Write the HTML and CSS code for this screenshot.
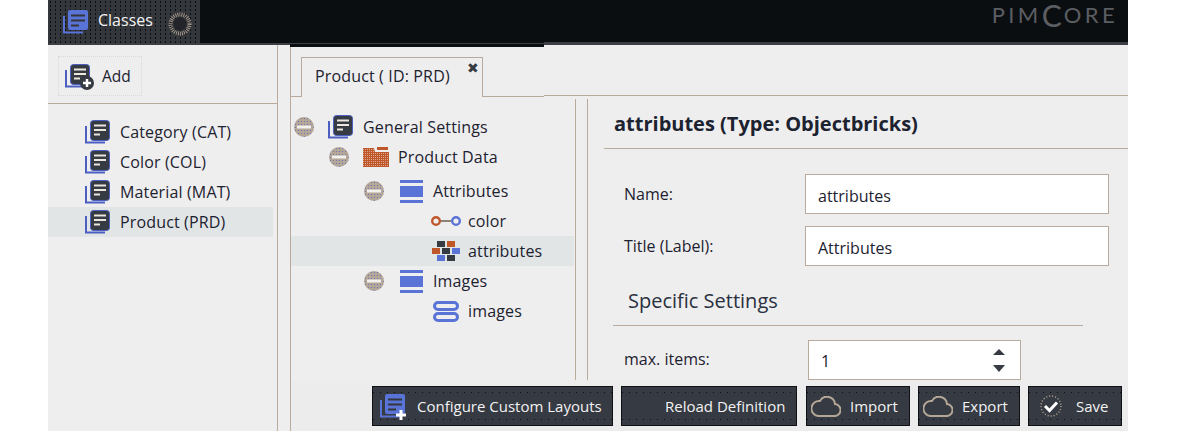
FILE: index.html
```html
<!DOCTYPE html>
<html lang="en">
<head>
<meta charset="utf-8">
<title>Classes</title>
<link rel="stylesheet" href="styles.css">
</head>
<body>
<svg class="defs" width="0" height="0" aria-hidden="true">
  <defs>
    <pattern id="dots" width="3" height="3" patternUnits="userSpaceOnUse"><rect width="3" height="3" fill="#b5a797"/><rect x="1" y="1" width="1" height="1" fill="#6d77b8"/></pattern>
    <pattern id="fold" width="2" height="2" patternUnits="userSpaceOnUse"><rect width="2" height="2" fill="#c0572b"/><rect width="1" height="1" fill="#dba98e"/></pattern>
    <symbol id="i-class" viewBox="0 0 25 24">
      <path d="M1 6v16.500h19" fill="none" stroke="#4a5fc1" stroke-width="2"/>
      <rect x="5.500" y="0.500" width="19" height="20" rx="3" fill="#363a42" stroke="#4a5fc1"/>
      <path d="M9 5.500h12M9 10h12M9 14.500h6" stroke="#ece6de" stroke-width="2"/>
    </symbol>
    <symbol id="i-class-blue" viewBox="0 0 25 24">
      <path d="M1 6v16.500h19" fill="none" stroke="#5a73d6" stroke-width="2"/>
      <rect x="5" y="0" width="20" height="20" rx="2" fill="#5a73d6"/>
      <path d="M8 5.500h14M8 10.500h14M8 15.500h8" stroke="#33363b" stroke-width="2"/>
    </symbol>
    <symbol id="i-minus" viewBox="0 0 20 20">
      <circle cx="10" cy="10" r="10" fill="url(#dots)"/>
      <rect x="3" y="8.500" width="14" height="3" fill="#f2f0ec"/>
    </symbol>
    <symbol id="i-folder" viewBox="0 0 26 20">
      <path d="M0 1h11l1 4h14v15H0z" fill="url(#fold)"/>
      <path d="M14 0h11v3H14z" fill="#c0572b"/>
    </symbol>
    <symbol id="i-block" viewBox="0 0 23 23">
      <path d="M0 0h23v3H0zM0 6h23v11H0zM0 20h23v3H0z" fill="#5a73d6"/>
    </symbol>
    <symbol id="i-keyval" viewBox="0 0 30 10">
      <path d="M9 5h13" stroke="#8a8478" stroke-width="2"/>
      <circle cx="5" cy="5" r="3.800" fill="none" stroke="#c0572b" stroke-width="2.400"/>
      <circle cx="25" cy="5" r="3.800" fill="none" stroke="#5a73d6" stroke-width="2.400"/>
    </symbol>
    <symbol id="i-bricks" viewBox="0 0 29 21">
      <path d="M5 0h8v6H5zM15 14h8v6h-8zM10 7h8v6h-8z" fill="#363a42"/>
      <path d="M15 0h8v6h-8zM0 7h8v6H0z" fill="#c0572b"/>
      <path d="M20 7h8v6h-8zM5 14h8v6H5z" fill="#5a73d6"/>
    </symbol>
    <symbol id="i-images" viewBox="0 0 26 21">
      <rect x="1.500" y="1.500" width="23" height="7" rx="3.500" fill="none" stroke="#5a73d6" stroke-width="3"/>
      <rect x="1.500" y="12.500" width="23" height="7" rx="3.500" fill="none" stroke="#5a73d6" stroke-width="3"/>
    </symbol>
    <symbol id="i-cloud" viewBox="0 0 30 21">
      <path d="M7 20h16a6 6 0 0 0 1-12 8 8 0 0 0-15-3 7.500 7.500 0 0 0-2 15z" fill="none" stroke="#b5a797" stroke-width="2"/>
    </symbol>
  </defs>
</svg>

<div class="app">
  <header class="topbar">
    <div class="maintab">
      <svg class="ico"><use href="#i-class-blue"/></svg>
      <span class="maintab-label">Classes</span>
      <svg class="spinner" viewBox="0 0 24 24" aria-hidden="true">
        <circle cx="12" cy="12" r="9.500" fill="none" stroke="#b5a797" stroke-width="4" stroke-dasharray="0.800 1.200"/>
        <circle cx="12" cy="12" r="6.500" fill="#22242a"/>
      </svg>
    </div>
    <div class="logo">PIM<span class="logo-c">C</span>ORE</div>
  </header>

  <div class="main">
    <aside class="sidebar">
      <div class="side-tools">
        <button class="add-btn" type="button">
          <span class="add-ico">
            <svg class="ico"><use href="#i-class"/></svg>
            <svg class="plus" viewBox="0 0 14 14"><circle cx="7" cy="7" r="7" fill="#363a42"/><path d="M7 3v8M3 7h8" stroke="#fff" stroke-width="2.500"/></svg>
          </span>
          Add
        </button>
      </div>
      <ul class="class-list">
        <li class="class-item"><svg class="ico"><use href="#i-class"/></svg>Category (CAT)</li>
        <li class="class-item"><svg class="ico"><use href="#i-class"/></svg>Color (COL)</li>
        <li class="class-item"><svg class="ico"><use href="#i-class"/></svg>Material (MAT)</li>
        <li class="class-item is-selected"><svg class="ico"><use href="#i-class"/></svg>Product (PRD)</li>
      </ul>
    </aside>

    <section class="workspace">
      <div class="tabstrip">
        <div class="doc-tab">Product ( ID: PRD)<span class="doc-close">&#10006;</span></div>
      </div>

      <div class="panels">
        <div class="tree">
          <div class="node l0"><svg class="toggle"><use href="#i-minus"/></svg><svg class="ico"><use href="#i-class"/></svg>General Settings</div>
          <div class="node l1"><svg class="toggle"><use href="#i-minus"/></svg><svg class="ico folder"><use href="#i-folder"/></svg>Product Data</div>
          <div class="node l2 spaced"><svg class="toggle"><use href="#i-minus"/></svg><svg class="ico block"><use href="#i-block"/></svg>Attributes</div>
          <div class="node l3"><svg class="ico keyval"><use href="#i-keyval"/></svg>color</div>
          <div class="node l3 is-selected"><svg class="ico bricks"><use href="#i-bricks"/></svg>attributes</div>
          <div class="node l2"><svg class="toggle"><use href="#i-minus"/></svg><svg class="ico block"><use href="#i-block"/></svg>Images</div>
          <div class="node l3"><svg class="ico images"><use href="#i-images"/></svg>images</div>
        </div>

        <div class="editor">
          <h2 class="editor-title">attributes (Type: Objectbricks)</h2>
          <div class="form">
            <label class="field"><span class="field-label">Name:</span><input class="text-input" value="attributes"></label>
            <label class="field"><span class="field-label">Title (Label):</span><input class="text-input" value="Attributes"></label>
            <h3 class="fieldset-title">Specific Settings</h3>
            <label class="field field-num"><span class="field-label">max. items:</span>
              <span class="num-input">1
                <span class="num-arrows"><span class="arrow-up"></span><span class="arrow-down"></span></span>
              </span>
            </label>
          </div>
        </div>
      </div>

      <footer class="actions">
        <button class="btn btn-config" type="button">
          <span class="cfg-ico"><svg class="ico"><use href="#i-class-blue"/></svg><svg class="cfg-plus" viewBox="0 0 12 12"><path d="M6 1v10M1 6h10" stroke="#fff" stroke-width="3"/></svg></span>
          Configure Custom Layouts
        </button>
        <button class="btn btn-reload" type="button">Reload Definition</button>
        <button class="btn btn-import" type="button"><svg class="cloud"><use href="#i-cloud"/></svg>Import</button>
        <button class="btn btn-export" type="button"><svg class="cloud"><use href="#i-cloud"/></svg>Export</button>
        <button class="btn btn-save" type="button">
          <svg class="check" viewBox="0 0 22 22" aria-hidden="true">
            <circle cx="11" cy="11" r="10" fill="none" stroke="#b5a797" stroke-width="1.500" stroke-dasharray="1 2"/>
            <path d="M5 11l4.500 4.500L17 7.500" fill="none" stroke="#fff" stroke-width="3"/>
          </svg>
          Save
        </button>
      </footer>
    </section>
  </div>
</div>
</body>
</html>
```
FILE: styles.css
```css
* { box-sizing: border-box; }
html, body { margin: 0; height: 100%; background: #fff; overflow: hidden; }
body { font-family: "Open Sans", "Liberation Sans", sans-serif; font-size: 16px; color: #1d2230; }
.defs { position: absolute; }
ul { list-style: none; margin: 0; padding: 0; }
button { font: inherit; }

.app { width: 1080px; height: 431px; margin-left: 48px; background: #eeeeee; display: flex; flex-direction: column; overflow: hidden; }

.topbar { position: relative; flex: 0 0 45px; background: #0b0e11; border-bottom: 2px solid #3b3e43; display: flex; justify-content: space-between; }
.topbar::before { content: ""; position: absolute; left: 496px; right: 0; top: 42px; height: 3px; background: #3b3e43; }
.topbar::after { content: ""; position: absolute; left: 242px; width: 254px; top: 43px; height: 3px; background: #0b0e11; border-top: 1px solid #3b3e43; z-index: 1; }
.maintab { width: 152px; height: 43px; display: flex; align-items: center; padding-left: 15px;
  background: #33363b radial-gradient(circle, #0c0d10 0.7px, transparent 0.9px) 0 0 / 5px 4px; }
.ico { width: 25px; height: 24px; flex: none; }
.maintab-label { color: #f4f4f4; margin: 0 0 3px 10px; font-size: 16px; }
.spinner { width: 24px; height: 24px; margin: 4px 0 0 15px; }
.logo { font-family: Lato, "Open Sans", sans-serif; font-weight: 400; font-size: 22px; line-height: 30px; letter-spacing: 3.400px; color: #5b5e62; margin: 0 10px 0 0; height: 30px; display: flex; align-items: center; }
.logo-c { font-size: 30px; line-height: 30px; letter-spacing: 2px; }

.main { flex: 1; display: flex; min-height: 0; }
.sidebar { flex: 0 0 230px; border-right: 1px solid #b8aa9c; }
.side-tools { height: 59px; padding-top: 11px; padding-left: 10px; border-bottom: 1px solid #b8aa9c; }
.add-btn { width: 84px; height: 40px; display: flex; align-items: center; padding: 0 0 0 6px; gap: 12px; background: #eeeeee; border: 1px dotted #d5d9da; color: #1d2230; font-size: 15.500px; }
.add-ico { position: relative; display: flex; }
.plus { position: absolute; right: -4px; bottom: -2px; width: 14px; height: 14px; }
.class-list { padding-top: 13px; }
.class-item { height: 30px; width: 225px; display: flex; align-items: center; gap: 10px; padding-left: 37px; font-size: 16px; letter-spacing: 0.150px; }
.is-selected { background: #e1e5e6; }

.workspace { position: relative; flex: 1; min-width: 0; margin-left: 12px; border-left: 1px solid #b8aa9c; display: flex; flex-direction: column; }
.tabstrip { position: relative; flex: 0 0 51px; padding: 12px 0 0 10px; border-bottom: 1px solid #b8aa9c; display: flex; align-items: flex-end; }
.tabstrip::after { content: ""; position: absolute; right: 0; width: 584px; bottom: -1px; height: 2px; background: linear-gradient(#b8aa9c 50%, #eeeeee 50%); }
.doc-tab { position: relative; width: 182px; height: 40px; margin-bottom: -1px; background: #eeeeee; border: 1px solid #b8aa9c; border-bottom: 0; padding: 8px 0 0 13px; font-size: 16px; line-height: 20px; letter-spacing: 0.150px; }
.doc-close { position: absolute; right: 3px; top: 0; font-size: 14px; color: #363a42; font-family: "DejaVu Sans", sans-serif; }

.panels { flex: 1; min-height: 0; display: flex; padding-top: 2px; }
.tree { flex: 0 0 285px; height: 282px; border-right: 1px solid #b8aa9c; padding-top: 13px; }
.node { height: 30px; display: flex; align-items: center; font-size: 16px; letter-spacing: 0.150px; }
.node.spaced { margin-top: 4px; }
.toggle { width: 20px; height: 20px; margin-right: 14px; flex: none; }
.node .ico { margin-right: 10px; }
.l0 { padding-left: 3px; }
.l1 { padding-left: 38px; }
.l2 { padding-left: 73px; }
.l3 { padding-left: 142px; }
.node.is-selected { margin-right: 1px; }
.node .folder { width: 26px; height: 20px; margin-right: 9px; }
.node .block { width: 23px; height: 23px; margin-left: 2px; margin-right: 10px; }
.node .keyval { width: 30px; height: 10px; margin-left: -2px; margin-right: 7px; }
.node .bricks { width: 29px; height: 21px; margin-left: -1px; margin-right: 7px; }
.node .images { width: 26px; height: 21px; margin-right: 9px; }

.editor { flex: 1; min-width: 0; margin-left: 11px; border-left: 1px solid #b8aa9c; height: 282px; overflow: hidden; padding-left: 16px; }
.editor-title { margin: 0; height: 50px; padding: 11px 0 0 10px; border-bottom: 1px solid #b8aa9c; font-size: 20px; line-height: 27px; font-weight: 700; }
.form { padding: 25px 0 0 9px; }
.field { display: flex; align-items: center; height: 40px; margin-bottom: 12px; }
.field-label { width: 192px; padding-left: 11px; font-size: 16px; }
.text-input { width: 304px; height: 40px; border: 1px solid #b8aa9c; background: #fff; padding: 4px 12px 0; font: inherit; font-size: 16px; color: #1d2230; border-radius: 0; outline: 0; }
.fieldset-title { margin: 0; width: 470px; height: 48px; padding: 8px 0 0 15px; border-bottom: 1px solid #b8aa9c; font-size: 20px; font-weight: 400; line-height: 30px; color: #2a3040; }
.field-num { margin-top: 13px; height: 41px; }
.field-num .field-label { width: 195px; padding-bottom: 2px; }
.num-input { position: relative; width: 213px; height: 40px; background: #fff; border: 1px solid #b8aa9c; padding: 9px 12px 0; font-size: 16px; line-height: 22px; }
.num-arrows { position: absolute; right: 15px; top: 8px; display: flex; flex-direction: column; gap: 10px; }
.arrow-up, .arrow-down { width: 0; height: 0; border-left: 6px solid transparent; border-right: 6px solid transparent; }
.arrow-up { border-bottom: 6px solid #363a42; }
.arrow-down { border-top: 7px solid #363a42; }

.actions { flex: 0 0 51px; display: flex; justify-content: flex-end; align-items: flex-start; gap: 8px; padding: 6px 6px 0 0; background: #ececec; }
.btn { height: 40px; display: flex; align-items: center; padding: 0; border: 1px solid #101114; color: #f2f2f2; font-size: 15px;
  background-color: #363a42;
  background-image: linear-gradient(to right, #0d0e11 1px, transparent 1px), linear-gradient(to right, #0d0e11 1px, transparent 1px);
  background-size: 7px 1px, 7px 1px; background-position: 0 5px, 0 32px; background-repeat: repeat-x; }
.btn-config { width: 241px; padding-left: 7px; gap: 12px; }
.cfg-ico { position: relative; display: flex; }
.cfg-plus { position: absolute; right: -2px; bottom: -3px; width: 12px; height: 12px; }
.btn-reload { width: 176px; padding-left: 43px; margin-right: 1px; }
.btn-import { width: 104px; padding-left: 4px; gap: 9px; }
.btn-export { width: 102px; padding-left: 4px; gap: 9px; }
.btn-save { width: 94px; padding-left: 11px; gap: 14px; }
.cloud { width: 30px; height: 21px; flex: none; }
.check { width: 22px; height: 22px; flex: none; }
```
